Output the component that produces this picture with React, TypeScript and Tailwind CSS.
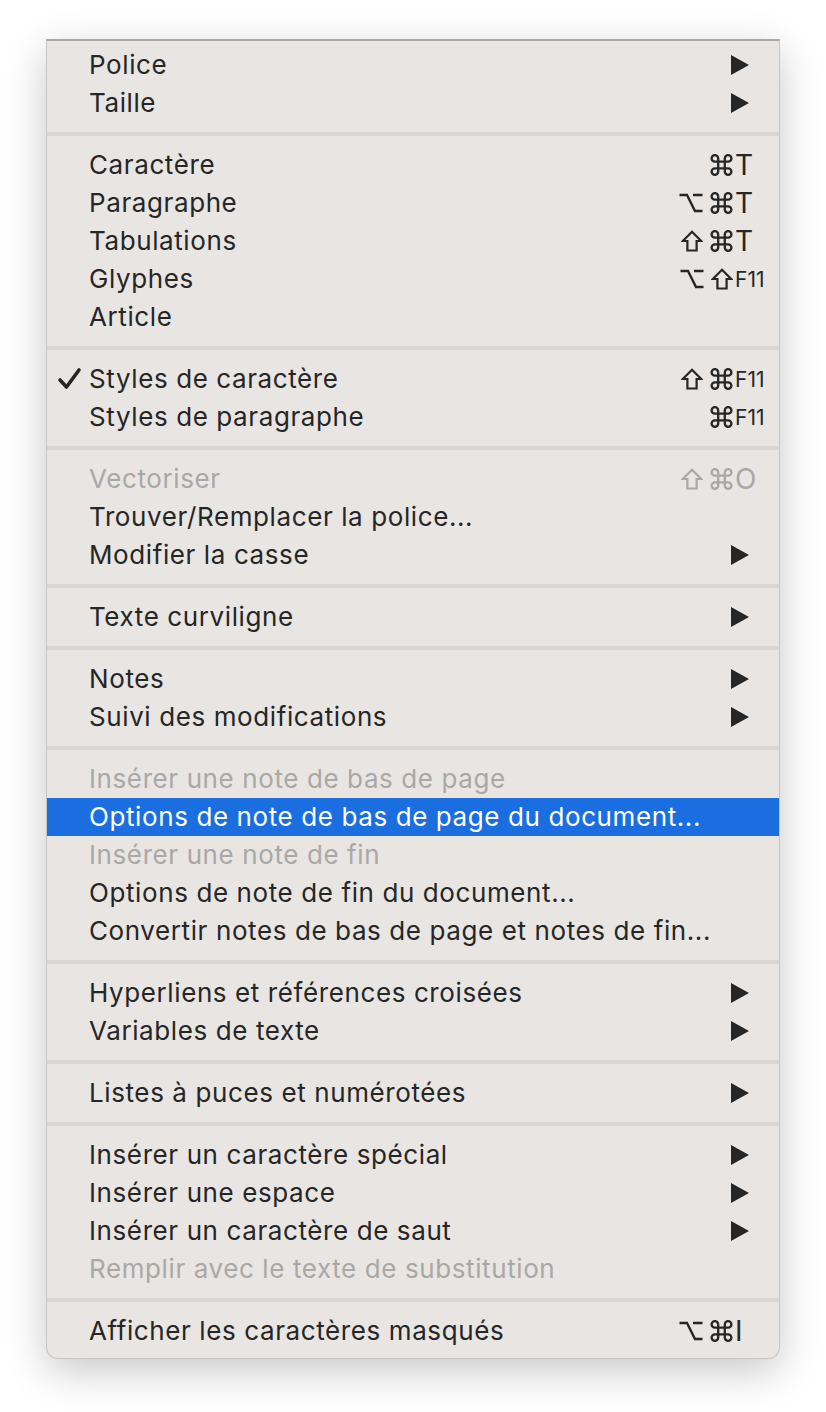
import React from 'react';

type Mod = 'cmd' | 'opt' | 'shift';

type Item =
  | { sep: true }
  | {
      sep?: false;
      label: string;
      mods?: Mod[];
      keyName?: string;
      small?: boolean;
      submenu?: boolean;
      disabled?: boolean;
      checked?: boolean;
      active?: boolean;
    };

const items: Item[] = [
  { label: 'Police', submenu: true },
  { label: 'Taille', submenu: true },
  { sep: true },
  { label: 'Caractère', mods: ['cmd'], keyName: 'T' },
  { label: 'Paragraphe', mods: ['opt', 'cmd'], keyName: 'T' },
  { label: 'Tabulations', mods: ['shift', 'cmd'], keyName: 'T' },
  { label: 'Glyphes', mods: ['opt', 'shift'], keyName: 'F11', small: true },
  { label: 'Article' },
  { sep: true },
  { label: 'Styles de caractère', mods: ['shift', 'cmd'], keyName: 'F11', small: true, checked: true },
  { label: 'Styles de paragraphe', mods: ['cmd'], keyName: 'F11', small: true },
  { sep: true },
  { label: 'Vectoriser', mods: ['shift', 'cmd'], keyName: 'O', disabled: true },
  { label: 'Trouver/Remplacer la police...' },
  { label: 'Modifier la casse', submenu: true },
  { sep: true },
  { label: 'Texte curviligne', submenu: true },
  { sep: true },
  { label: 'Notes', submenu: true },
  { label: 'Suivi des modifications', submenu: true },
  { sep: true },
  { label: 'Insérer une note de bas de page', disabled: true },
  { label: 'Options de note de bas de page du document...', active: true },
  { label: 'Insérer une note de fin', disabled: true },
  { label: 'Options de note de fin du document...' },
  { label: 'Convertir notes de bas de page et notes de fin...' },
  { sep: true },
  { label: 'Hyperliens et références croisées', submenu: true },
  { label: 'Variables de texte', submenu: true },
  { sep: true },
  { label: 'Listes à puces et numérotées', submenu: true },
  { sep: true },
  { label: 'Insérer un caractère spécial', submenu: true },
  { label: 'Insérer une espace', submenu: true },
  { label: 'Insérer un caractère de saut', submenu: true },
  { label: 'Remplir avec le texte de substitution', disabled: true },
  { sep: true },
  { label: 'Afficher les caractères masqués', mods: ['opt', 'cmd'], keyName: 'I' },
];

const Check = () => (
  <svg width="26" height="26" viewBox="0 0 26 26" className="ml-[10px]">
    <path d="M3 14 L9.5 21 L22 4" fill="none" stroke="#262626" strokeWidth="3.6" strokeLinecap="round" strokeLinejoin="round" />
  </svg>
);

const Arrow = ({ color }: { color: string }) => (
  <svg width="18" height="20" viewBox="0 0 18 20" className="mr-[30px]">
    <polygon points="0,0 18,10 0,20" fill={color} />
  </svg>
);

// modifier key glyphs
const CmdIcon = () => (
  <svg width="23" height="22" viewBox="2 2 20 20" fill="none" stroke="currentColor" strokeWidth="2.1">
    <path d="M15 6v12a3 3 0 1 0 3-3H6a3 3 0 1 0 3 3V6a3 3 0 1 0-3 3h12a3 3 0 1 0-3-3" />
  </svg>
);

const OptIcon = () => (
  <svg width="24" height="20" viewBox="0 0 24 20" fill="none" stroke="currentColor" strokeWidth="2.4">
    <path d="M0.5 2h7.5l8 16h7.5M14 2h9.5" />
  </svg>
);

const ShiftIcon = () => (
  <svg width="22" height="22" viewBox="0 0 22 22" fill="none" stroke="currentColor" strokeWidth="2.2" strokeLinejoin="miter">
    <path d="M11 1.8 L20.2 11 H15.6 V20.5 H6.4 V11 H1.8 Z" />
  </svg>
);

const ModIcon = ({ m }: { m: Mod }) => (m === 'cmd' ? <CmdIcon /> : m === 'opt' ? <OptIcon /> : <ShiftIcon />);

export default function App() {
  return (
    <div className="min-h-[1412px] bg-white pt-[39px] pl-[46px]" style={{ fontFamily: 'Inter, "Noto Sans", sans-serif' }}>
      <div className="w-[734px] bg-[#e8e5e3] border border-[#c8c6c4] border-t-2 border-t-[#a8a8a8] rounded-b-[12px] pt-[5px] pb-[8px] shadow-[0_12px_40px_rgba(0,0,0,0.22)]">
        {items.map((it, i) => {
          if (it.sep) {
            return (
              <div key={i} className="h-[24px] flex items-center">
                <div className="w-full h-[4px] bg-[#d9d6d4]" />
              </div>
            );
          }
          const color = it.active ? 'text-white' : it.disabled ? 'text-[#aaa8a6]' : 'text-[#262626]';
          return (
            <div key={i} className={`h-[38px] flex items-center ${it.active ? 'bg-[#1b6ee0]' : ''} ${color}`}>
              <div className="w-[42px] flex items-center">{it.checked && <Check />}</div>
              <div className="flex-1 text-[26px] leading-none tracking-[0.6px]">{it.label}</div>
              {it.submenu && <Arrow color={it.active ? '#fff' : '#262626'} />}
              {it.keyName && (
                <div className="flex items-center mr-[12px]">
                  <div className="flex items-center gap-[7px]">
                    {it.mods?.map((m, j) => <ModIcon key={j} m={m} />)}
                  </div>
                  <span className={`w-[32px] ml-[2px] leading-none ${it.small ? 'text-[21px]' : 'text-[28px]'}`}>
                    {it.keyName}
                  </span>
                </div>
              )}
            </div>
          );
        })}
      </div>
    </div>
  );
}
